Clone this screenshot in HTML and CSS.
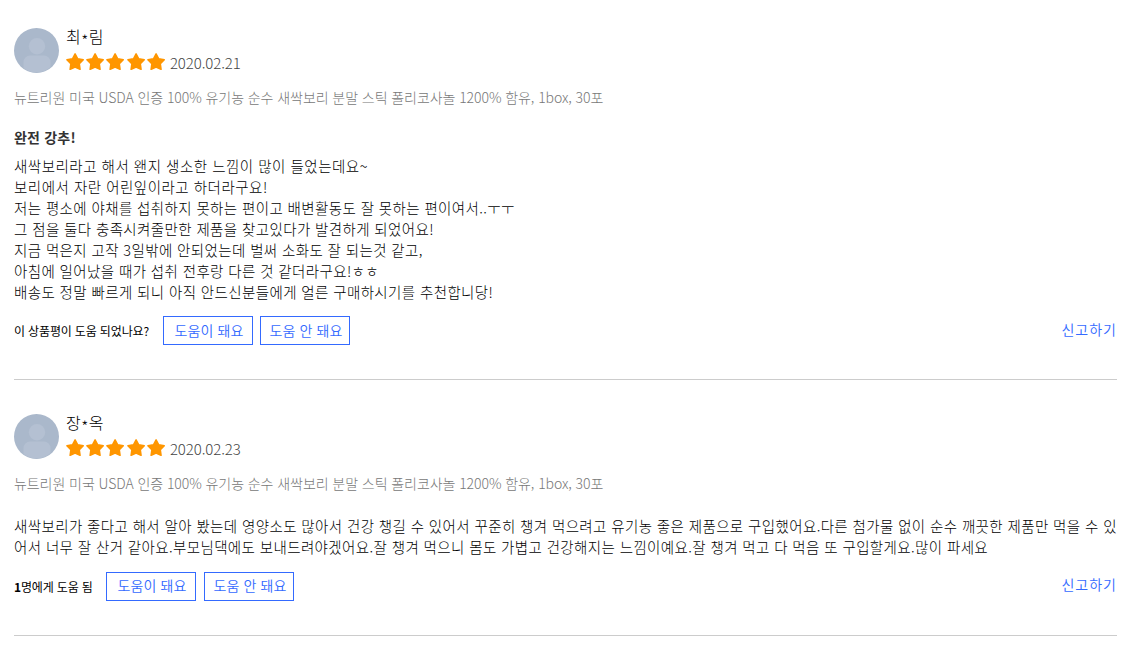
FILE: index.html
```
<!DOCTYPE html>
<html lang="ko">
<head>
    <meta charset="UTF-8">
    <meta name="viewport" content="width=device-width, initial-scale=1.0">
    <title>상품평</title>
    <link rel="stylesheet" href="styles.css">
</head>
<body>
    <svg class="defs" width="0" height="0">
        <symbol id="avatar" viewBox="0 0 45 45">
            <circle cx="22.5" cy="22.5" r="22.5" fill="#aab8cb"/>
            <circle cx="23" cy="18.3" r="8.2" fill="#b4c0d2"/>
            <path d="M9.500 40V34a6.500 6.500 0 0 1 6.500-6.500h14a6.500 6.500 0 0 1 6.500 6.500v5a21 21 0 0 1-27 1z" fill="#b4c0d2"/>
        </symbol>
        <symbol id="star" viewBox="0.8 0.4 16.4 16">
            <path d="M9 1.200l2.500 4.600 5.200.9-3.700 3.900.7 5.200L9 13.700l-4.700 2.100.7-5.200-3.700-3.900 5.200-.9z" fill="#ff9600" stroke="#ff9600" stroke-width="1.400" stroke-linejoin="round"/>
        </symbol>
    </svg>

    <article class="review">
        <div class="review-head">
            <svg class="avatar"><use href="#avatar"/></svg>
            <div>
                <div class="name">최<span class="mask">*</span>림</div>
                <div class="rating">
                    <svg class="star"><use href="#star"/></svg>
                    <svg class="star"><use href="#star"/></svg>
                    <svg class="star"><use href="#star"/></svg>
                    <svg class="star"><use href="#star"/></svg>
                    <svg class="star"><use href="#star"/></svg>
                    <span class="date">2020.02.21</span>
                </div>
            </div>
        </div>
        <div class="product">뉴트리원 미국 USDA 인증 100% 유기농 순수 새싹보리 분말 스틱 폴리코사놀 1200% 함유, 1box, 30포</div>
        <div class="headline">완전 강추!</div>
        <div class="content">
            <span class="wide">새싹보리라고 해서 왠지 생소한 느낌이 많이 들었는데요~</span><br>
            <span class="wide">보리에서 자란 어린잎이라고 하더라구요!</span><br>
            저는 평소에 야채를 섭취하지 못하는 편이고 배변활동도 잘 못하는 편이여서..ㅜㅜ<br>
            그 점을 둘다 충족시켜줄만한 제품을 찾고있다가 발견하게 되었어요!<br>
            지금 먹은지 고작 3일밖에 안되었는데 벌써 소화도 잘 되는것 같고,<br>
            아침에 일어났을 때가 섭취 전후랑 다른 것 같더라구요!ㅎㅎ<br>
            배송도 정말 빠르게 되니 아직 안드신분들에게 얼른 구매하시기를 추천합니당!
        </div>
        <div class="help">
            <span class="help-text question">이 상품평이 도움 되었나요?</span>
            <button class="btn">도움이 돼요</button>
            <button class="btn">도움 안 돼요</button>
            <a class="report">신고하기</a>
        </div>
    </article>

    <article class="review">
        <div class="review-head">
            <svg class="avatar"><use href="#avatar"/></svg>
            <div>
                <div class="name">장<span class="mask">*</span>옥</div>
                <div class="rating">
                    <svg class="star"><use href="#star"/></svg>
                    <svg class="star"><use href="#star"/></svg>
                    <svg class="star"><use href="#star"/></svg>
                    <svg class="star"><use href="#star"/></svg>
                    <svg class="star"><use href="#star"/></svg>
                    <span class="date">2020.02.23</span>
                </div>
            </div>
        </div>
        <div class="product">뉴트리원 미국 USDA 인증 100% 유기농 순수 새싹보리 분말 스틱 폴리코사놀 1200% 함유, 1box, 30포</div>
        <div class="content no-headline">
            새싹보리가 좋다고 해서 알아 봤는데 영양소도 많아서 건강 챙길 수 있어서 꾸준히 챙겨 먹으려고 유기농 좋은 제품으로 구입했어요.다른 첨가물 없이 순수 깨끗한 제품만 먹을 수 있<br>
            어서 너무 잘 산거 같아요.부모님댁에도 보내드려야겠어요.잘 챙겨 먹으니 몸도 가볍고 건강해지는 느낌이예요.잘 챙겨 먹고 다 먹음 또 구입할게요.많이 파세요
        </div>
        <div class="help">
            <span class="help-text count"><b>1</b>명에게 도움 됨</span>
            <button class="btn">도움이 돼요</button>
            <button class="btn">도움 안 돼요</button>
            <a class="report">신고하기</a>
        </div>
    </article>
</body>
</html>
```
FILE: styles.css
```
body {
    margin: 0;
    padding: 0 31px 0 14px;
    background: #fff;
    color: #000;
    font-family: "Noto Sans CJK KR", sans-serif;
    font-size: 14px;
    font-weight: 300;
}
.defs {
    display: block;
}
.review {
    border-bottom: 1px solid #ccc;
    padding: 28px 0 34px;
    white-space: nowrap;
}
.review + .review {
    padding-top: 34px;
}
.review-head {
    display: flex;
    gap: 7px;
    height: 45px;
}
.avatar {
    width: 45px;
    height: 45px;
}
.name {
    height: 25px;
    font-size: 16px;
    line-height: 17px;
    letter-spacing: 0.5px;
}
.mask {
    vertical-align: -4px;
    line-height: 1px;
}
.rating {
    display: flex;
    gap: 2px;
    height: 20px;
}
.star {
    width: 18.2px;
    height: 17px;
}
.date {
    margin-left: 3px;
    color: #444;
    font-size: 15px;
    line-height: 20px;
    letter-spacing: -0.1px;
}
.product {
    margin-top: 14px;
    color: #777;
    line-height: 21px;
    letter-spacing: -0.07px;
}
.headline {
    margin-top: 19px;
    color: #333;
    font-weight: 700;
    line-height: 21px;
    letter-spacing: 0.2px;
}
.content {
    margin-top: 7px;
    font-size: 14.5px;
    line-height: 21px;
    letter-spacing: 0.38px;
}
.wide {
    letter-spacing: 0.5px;
}
.no-headline {
    margin-top: 21px;
}
.help {
    display: flex;
    align-items: center;
    height: 29px;
    margin-top: 14px;
}
.no-headline + .help {
    margin-top: 15px;
}
.help-text {
    color: #000;
    font-size: 12px;
    font-weight: 400;
    letter-spacing: -0.15px;
}
.question {
    width: 149px;
}
.count {
    width: 92px;
}
.btn {
    width: 90px;
    height: 29px;
    margin-right: 7px;
    padding: 0 0 2px 2px;
    border: 1px solid #346aff;
    background: #fff;
    color: #346aff;
    font: inherit;
    font-weight: 350;
    letter-spacing: 0.1px;
}
.no-headline + .help .btn {
    margin-right: 8px;
    padding-bottom: 4px;
}
.report {
    margin-left: auto;
    padding-bottom: 4px;
    color: #346aff;
    font-weight: 350;
    letter-spacing: 1px;
}
.no-headline + .help .report {
    padding-bottom: 6px;
}
```
